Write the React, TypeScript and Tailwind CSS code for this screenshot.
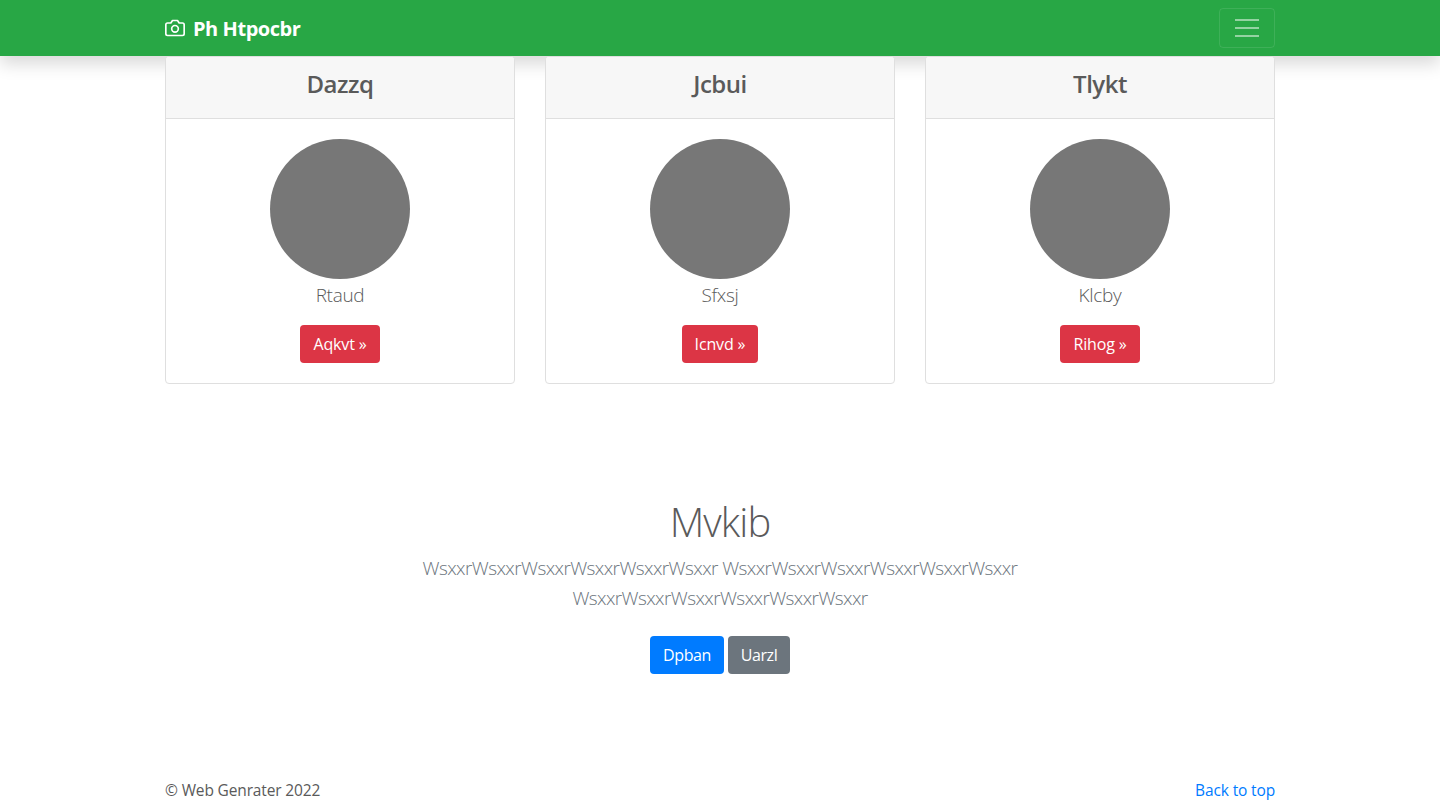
const cards = [
  { title: 'Dazzq', text: 'Rtaud', action: 'Aqkvt »', width: 'w-20' },
  { title: 'Jcbui', text: 'Sfxsj', action: 'Icnvd »', width: 'w-[76px]' },
  { title: 'Tlykt', text: 'Klcby', action: 'Rihog »', width: 'w-20' },
];

function CameraIcon() {
  return (
    <svg
      width="20"
      height="20"
      viewBox="0 0 24 24"
      fill="none"
      stroke="currentColor"
      strokeWidth="2"
      strokeLinecap="round"
      strokeLinejoin="round"
      aria-hidden="true"
    >
      <path d="M23 19a2 2 0 0 1-2 2H3a2 2 0 0 1-2-2V8a2 2 0 0 1 2-2h4l2-3h6l2 3h4a2 2 0 0 1 2 2z" />
      <circle cx="12" cy="13" r="4" />
    </svg>
  );
}

function Navbar() {
  return (
    <header className="h-14 bg-[#28a745] shadow-[0_8px_16px_rgba(0,0,0,0.15)]">
      <div className="mx-auto flex h-full w-[1110px] items-center justify-between">
        <a href="#" className="flex items-center gap-2 text-xl leading-[30px] font-bold text-white">
          <CameraIcon />
          <span className="pt-0.5 tracking-[-0.45px]">Ph Htpocbr</span>
        </a>
        <button
          aria-label="Menu"
          className="flex h-10 w-14 items-center justify-center rounded border border-white/10"
        >
          <svg width="30" height="30" viewBox="0 0 30 30" stroke="rgba(255,255,255,0.5)" strokeWidth="2" strokeMiterlimit="10">
            <path d="M3 7h24M3 15h24M3 23h24" />
          </svg>
        </button>
      </div>
    </header>
  );
}

export default function App() {
  return (
    <div className="flex h-[802px] flex-col overflow-hidden bg-white font-['Open_Sans',sans-serif] text-base leading-6 text-[#5a5a5a]">
      <Navbar />
      <main>
        <div className="relative mx-auto grid w-[1110px] grid-cols-3 gap-[30px]">
          {cards.map((card) => (
            <div key={card.title} className="h-[328px] overflow-hidden rounded border border-[#dfdfdf] bg-white text-center">
              <div className="h-[62px] border-b border-[#dfdfdf] bg-[#f7f7f7] pt-3">
                <h4 className="text-2xl leading-[30px] font-semibold tracking-[-0.5px]">{card.title}</h4>
              </div>
              <div className="flex flex-col items-center pt-5">
                <div className="size-[140px] rounded-full bg-[#777]" />
                <p className="h-[46px] text-[19px] leading-[32px] font-light tracking-[-0.3px]">{card.text}</p>
                <a href="#" className={`flex h-[38px] items-center justify-center rounded bg-[#dc3545] tracking-[-0.15px] whitespace-nowrap text-white ${card.width}`}>
                  {card.action}
                </a>
              </div>
            </div>
          ))}
        </div>
        <section className="flex flex-col items-center pt-[114px] text-center">
          <h1 className="text-[40px] leading-[48px] font-light tracking-[-0.9px]">Mvkib</h1>
          <p className="mt-[7px] text-[19px] leading-[30px] font-light tracking-[-0.58px] text-[#6c757d]">
            WsxxrWsxxrWsxxrWsxxrWsxxrWsxxr WsxxrWsxxrWsxxrWsxxrWsxxrWsxxr
            <br />
            WsxxrWsxxrWsxxrWsxxrWsxxrWsxxr
          </p>
          <div className="mt-[23px] flex gap-1 tracking-[-0.4px] text-white">
            <a href="#" className="flex h-[38px] w-[74px] items-center justify-center rounded bg-[#007bff]">Dpban</a>
            <a href="#" className="flex h-[38px] w-[62px] items-center justify-center rounded bg-[#6c757d]">Uarzl</a>
          </div>
        </section>
      </main>
      <footer className="mx-auto mt-auto flex w-[1110px] justify-between text-[15.5px] leading-6 tracking-[-0.14px]">
        <p>© Web Genrater 2022</p>
        <a href="#" className="text-[#007bff]">Back to top</a>
      </footer>
    </div>
  );
}
